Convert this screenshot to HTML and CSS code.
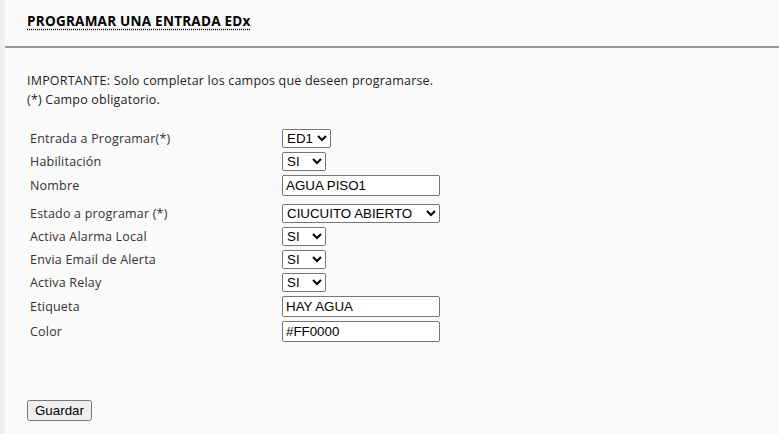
FILE: index.html
```html
<!DOCTYPE html>
<html lang="es">
<head>
  <meta charset="UTF-8" />
  <title>Programar una entrada EDx</title>
  <link rel="stylesheet" href="styles.css">
</head>
<body>

  <div class="main">
    <div class="header">
      <span class="title">PROGRAMAR UNA ENTRADA EDx</span>
    </div>

    <form class="content">
      <p class="note">
        IMPORTANTE: Solo completar los campos que deseen programarse.<br>
        (*) Campo obligatorio.
      </p>

      <table class="form-table">
        <tr>
          <td class="lbl">Entrada a Programar(*)</td>
          <td>
            <select class="entrada" name="entrada">
              <option>ED1</option>
              <option>ED2</option>
              <option>ED3</option>
              <option>ED4</option>
            </select>
          </td>
        </tr>
        <tr>
          <td class="lbl">Habilitación</td>
          <td><select class="yn"><option>SI</option><option>NO</option></select></td>
        </tr>
        <tr>
          <td class="lbl">Nombre</td>
          <td><input type="text" value="AGUA PISO1"></td>
        </tr>
        <tr class="gap">
          <td class="lbl">Estado a programar (*)</td>
          <td>
            <select class="estado">
              <option>CIUCUITO ABIERTO</option>
              <option>CIRCUITO CERRADO</option>
            </select>
          </td>
        </tr>
        <tr>
          <td class="lbl">Activa Alarma Local</td>
          <td><select class="yn"><option>SI</option><option>NO</option></select></td>
        </tr>
        <tr>
          <td class="lbl">Envia Email de Alerta</td>
          <td><select class="yn"><option>SI</option><option>NO</option></select></td>
        </tr>
        <tr>
          <td class="lbl">Activa Relay</td>
          <td><select class="yn"><option>SI</option><option>NO</option></select></td>
        </tr>
        <tr>
          <td class="lbl">Etiqueta</td>
          <td><input type="text" value="HAY AGUA"></td>
        </tr>
        <tr>
          <td class="lbl">Color</td>
          <td><input type="text" value="#FF0000"></td>
        </tr>
      </table>

      <div class="actions">
        <button type="button">Guardar</button>
      </div>
    </form>
  </div>

</body>
</html>
```

FILE: styles.css
```css
body {
  margin: 0;
  background: #f0f0f0;
  font-family: 'Open Sans', sans-serif;
  font-size: 12.5px;
  letter-spacing: 0.2px;
  color: #222;
}

.main {
  margin-left: 5px;
  min-height: 434px;
  background: #fafafa;
}

.header {
  padding: 12px 22px 0;
  height: 34px;
  border-bottom: 2px solid #999;
}

.title {
  font-weight: 700;
  font-size: 13.5px;
  letter-spacing: 0.25px;
  color: #000;
  text-decoration: underline dotted;
  text-underline-offset: 3px;
}

.content {
  padding: 0 22px;
}

.note {
  margin: 0;
  padding-top: 23px;
  line-height: 19px;
}

.form-table {
  margin-top: 17px;
  border-spacing: 2px;
}

.form-table td {
  padding: 1px;
}

.lbl {
  width: 248px;
  color: #333;
}

.gap td {
  padding-top: 5px;
}

select, input, button {
  font-family: Arial, 'Liberation Sans', sans-serif;
  font-size: 13.33px;
  letter-spacing: 0;
}

input {
  width: 150px;
}

.entrada {
  width: 49px;
}

.yn {
  width: 44px;
}

.estado {
  width: 158px;
}

.actions {
  margin-top: 55px;
}
```
